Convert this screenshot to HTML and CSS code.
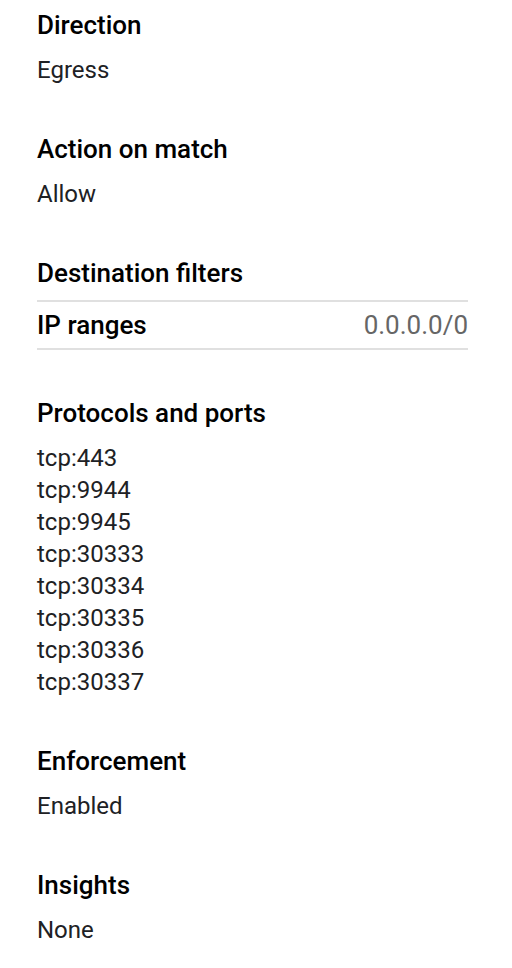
FILE: index.html
```html
<!DOCTYPE html>
<html lang="en">
<head>
  <meta charset="UTF-8" />
  <title>Firewall rule details</title>
  <meta name="viewport" content="width=device-width, initial-scale=1.0" />
  <link rel="stylesheet" href="styles.css">
</head>
<body>
  <div class="section">
    <div class="section-title">Direction</div>
    <div class="section-value">Egress</div>
  </div>

  <div class="section">
    <div class="section-title">Action on match</div>
    <div class="section-value">Allow</div>
  </div>

  <div class="section">
    <div class="section-title filter-title">Destination filters</div>
    <div class="filter-row">
      <div class="filter-label">IP ranges</div>
      <div class="filter-value">0.0.0.0/0</div>
    </div>
  </div>

  <div class="section">
    <div class="section-title">Protocols and ports</div>
    <div class="section-value">tcp:443</div>
    <div class="section-value">tcp:9944</div>
    <div class="section-value">tcp:9945</div>
    <div class="section-value">tcp:30333</div>
    <div class="section-value">tcp:30334</div>
    <div class="section-value">tcp:30335</div>
    <div class="section-value">tcp:30336</div>
    <div class="section-value">tcp:30337</div>
  </div>

  <div class="section">
    <div class="section-title">Enforcement</div>
    <div class="section-value">Enabled</div>
  </div>

  <div class="section">
    <div class="section-title">Insights</div>
    <div class="section-value">None</div>
  </div>
</body>
</html>
```

FILE: styles.css
```css
body {
  font-family: Roboto, "Noto Sans", sans-serif;
  background: #ffffff;
  color: #202124;
  margin: 0;
  padding: 9px 44px 0 37px;
}
.section {
  margin-bottom: 47px;
}
.section-title {
  font-size: 26px;
  font-weight: 500;
  line-height: 32px;
  color: #000000;
  margin-bottom: 13px;
}
.filter-title {
  margin-bottom: 11px;
}
.section-value {
  font-size: 24px;
  line-height: 32px;
  color: #202124;
}
.filter-row {
  display: flex;
  justify-content: space-between;
  align-items: center;
  height: 46px;
  border-top: 2px solid #e0e0e0;
  border-bottom: 2px solid #e0e0e0;
}
.filter-label {
  font-size: 26px;
  font-weight: 500;
  color: #000000;
}
.filter-value {
  font-size: 26px;
  color: #666666;
}
```
